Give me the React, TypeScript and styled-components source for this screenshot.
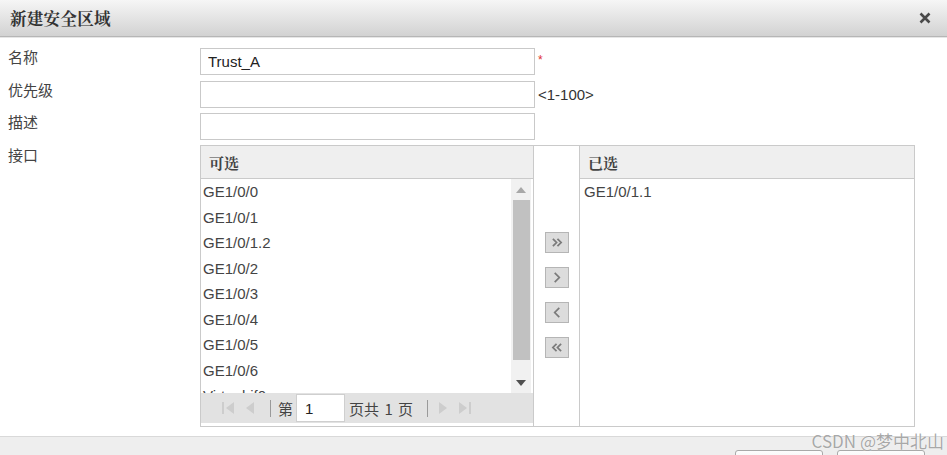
import React from 'react';
import styled, { createGlobalStyle } from 'styled-components';

const GlobalStyle = createGlobalStyle`
  html, body {
    margin: 0;
    padding: 0;
    background: #fff;
    overflow: hidden;
  }
  body {
    font-family: "Liberation Sans", "Noto Sans CJK SC", Arial, sans-serif;
  }
  * {
    box-sizing: border-box;
  }
`;

const available = [
  'GE1/0/0',
  'GE1/0/1',
  'GE1/0/1.2',
  'GE1/0/2',
  'GE1/0/3',
  'GE1/0/4',
  'GE1/0/5',
  'GE1/0/6',
  'Virtual-if0',
];
const selected = ['GE1/0/1.1'];

const CloseIcon = () => (
  <svg width="12" height="12" viewBox="0 0 12 12">
    <path d="M1.5 1.5L10.5 10.5M10.5 1.5L1.5 10.5" stroke="#4a4a4a" strokeWidth="2.6" />
  </svg>
);

const Chevrons = ({ dir, double }: { dir: 'left' | 'right'; double?: boolean }) => {
  let d: string;
  if (double) {
    d = dir === 'right'
      ? 'M7.5 6l4 4-4 4M12.5 6l4 4-4 4'
      : 'M11.5 6l-4 4 4 4M16.5 6l-4 4 4 4';
  } else {
    d = dir === 'right' ? 'M9.5 5l5 5-5 5' : 'M14.5 5l-5 5 5 5';
  }
  return (
    <svg width="22" height="19" viewBox="0 0 24 20">
      <path d={d} stroke="#7b7b7b" strokeWidth="1.9" fill="none" />
    </svg>
  );
};

const PagerIcon = ({ kind }: { kind: 'first' | 'prev' | 'next' | 'last' }) => {
  const c = '#cdcdcd';
  return (
    <svg width="16" height="14" viewBox="0 0 16 14">
      {kind === 'first' && (
        <>
          <rect x="1" y="1" width="2" height="12" fill={c} />
          <path d="M13 1L5 7l8 6z" fill={c} />
        </>
      )}
      {kind === 'prev' && <path d="M11 1L3 7l8 6z" fill={c} />}
      {kind === 'next' && <path d="M4 1l8 6-8 6z" fill={c} />}
      {kind === 'last' && (
        <>
          <path d="M3 1l8 6-8 6z" fill={c} />
          <rect x="13" y="1" width="2" height="12" fill={c} />
        </>
      )}
    </svg>
  );
};

const ArrowTriangle = ({ up, color }: { up?: boolean; color: string }) => (
  <svg width="10" height="6" viewBox="0 0 10 6">
    <path d={up ? 'M0 6L5 0l5 6z' : 'M0 0h10L5 6z'} fill={color} />
  </svg>
);

const App = () => (
  <>
    <GlobalStyle />
    <Dialog>
      <TitleBar>
        <Title>新建安全区域</Title>
        <CloseButton>
          <CloseIcon />
        </CloseButton>
      </TitleBar>

      <Form>
        <Label>名称</Label>
        <Field>
          <TextInput defaultValue="Trust_A" />
          <Required>*</Required>
        </Field>

        <Label>优先级</Label>
        <Field>
          <TextInput />
          <Hint>&lt;1-100&gt;</Hint>
        </Field>

        <Label>描述</Label>
        <Field>
          <TextInput />
        </Field>

        <Label>接口</Label>
        <Transfer>
          <Panel $width={333}>
            <PanelHeader>可选</PanelHeader>
            <ListArea>
              <Items>
                {available.map((name) => (
                  <Item key={name}>{name}</Item>
                ))}
              </Items>
              <ScrollTrack>
                <ScrollArrow>
                  <ArrowTriangle up color="#a8a8a8" />
                </ScrollArrow>
                <ScrollThumb />
                <ScrollSpacer />
                <ScrollArrow>
                  <ArrowTriangle color="#505050" />
                </ScrollArrow>
              </ScrollTrack>
            </ListArea>
            <Pager>
              <PagerIcon kind="first" />
              <PagerGap $w={6} />
              <PagerIcon kind="prev" />
              <PagerSep />
              <PagerText>第</PagerText>
              <PageInput defaultValue="1" />
              <PagerText>页共 1 页</PagerText>
              <PagerSep />
              <PagerIcon kind="next" />
              <PagerGap $w={5} />
              <PagerIcon kind="last" />
            </Pager>
          </Panel>

          <MoveColumn>
            <MoveButton><Chevrons dir="right" double /></MoveButton>
            <MoveButton><Chevrons dir="right" /></MoveButton>
            <MoveButton><Chevrons dir="left" /></MoveButton>
            <MoveButton><Chevrons dir="left" double /></MoveButton>
          </MoveColumn>

          <Panel $grow>
            <PanelHeader>已选</PanelHeader>
            <Items>
              {selected.map((name) => (
                <Item key={name} $indent={4}>{name}</Item>
              ))}
            </Items>
          </Panel>
        </Transfer>
      </Form>

      <Footer>
        <FooterButton />
        <FooterButton />
      </Footer>

      <Watermark>CSDN @梦中北山</Watermark>
    </Dialog>
  </>
);

const Dialog = styled.div`
  position: relative;
  width: 947px;
  height: 455px;
  overflow: hidden;
  background: #fff;
`;

const TitleBar = styled.div`
  height: 37px;
  display: flex;
  align-items: center;
  justify-content: space-between;
  padding: 0 16px 0 10px;
  background: linear-gradient(#f6f6f6, #d2d2d2);
  border-bottom: 1px solid #b6b6b6;
  box-shadow: 0 1px 0 #e6e6e6;
`;

const Title = styled.div`
  font-family: "Noto Serif CJK SC", "Noto Sans CJK SC", serif;
  font-size: 16.5px;
  font-weight: bold;
  color: #333;
  letter-spacing: 0.3px;
`;

const CloseButton = styled.div`
  display: flex;
  align-items: center;
  cursor: pointer;
`;

const Form = styled.div`
  display: grid;
  grid-template-columns: 200px 1fr;
  row-gap: 5.5px;
  padding-top: 11px;
`;

const Label = styled.div`
  padding-left: 8px;
  font-family: "Noto Sans CJK SC", sans-serif;
  font-size: 15px;
  line-height: 17px;
  color: #444;
`;

const Field = styled.div`
  display: flex;
  align-items: center;
`;

const TextInput = styled.input`
  width: 335px;
  height: 27px;
  border: 1px solid #c9c9c9;
  padding: 0 7px;
  font-family: "Liberation Sans", Arial, sans-serif;
  font-size: 15px;
  color: #222;
  outline: none;
`;

const Required = styled.span`
  align-self: flex-start;
  margin: 5px 0 0 3px;
  color: #e03030;
  font-size: 12px;
`;

const Hint = styled.span`
  margin-left: 3px;
  font-size: 15px;
  color: #333;
`;

const Transfer = styled.div`
  display: flex;
  width: 715px;
  height: 282px;
  margin-top: -0.5px;
  border: 1px solid #cacaca;
`;

const Panel = styled.div<{ $width?: number; $grow?: boolean }>`
  display: flex;
  flex-direction: column;
  ${({ $width }) => ($width ? `width: ${$width}px;` : '')}
  ${({ $grow }) => ($grow ? 'flex: 1;' : '')}
  border-right: ${({ $grow }) => ($grow ? 'none' : '1px solid #cacaca')};
  border-left: ${({ $grow }) => ($grow ? '1px solid #cacaca' : 'none')};
`;

const PanelHeader = styled.div`
  height: 33px;
  flex-shrink: 0;
  display: flex;
  align-items: center;
  padding-left: 8px;
  background: #efefef;
  border-bottom: 1px solid #cacaca;
  font-family: "Noto Serif CJK SC", "Noto Sans CJK SC", serif;
  font-size: 15px;
  font-weight: bold;
  color: #444;
`;

const ListArea = styled.div`
  display: flex;
  height: 214px;
  flex-shrink: 0;
`;

const Items = styled.div`
  flex: 1;
  overflow: hidden;
`;

const Item = styled.div<{ $indent?: number }>`
  height: 25.5px;
  line-height: 26px;
  padding-left: ${({ $indent }) => $indent ?? 2}px;
  font-size: 15px;
  color: #444;
  white-space: nowrap;
`;

const ScrollTrack = styled.div`
  width: 20px;
  margin-right: 2px;
  display: flex;
  flex-direction: column;
  align-items: center;
  background: #f1f1f1;
`;

const ScrollArrow = styled.div`
  height: 21px;
  width: 100%;
  display: flex;
  align-items: center;
  justify-content: center;
`;

const ScrollThumb = styled.div`
  width: 17px;
  height: 160px;
  background: #c1c1c1;
`;

const ScrollSpacer = styled.div`
  flex: 1;
`;

const Pager = styled.div`
  height: 30px;
  display: flex;
  align-items: center;
  padding-left: 20px;
  background: #e2e2e2;
  color: #333;
  font-size: 15px;
`;

const PagerGap = styled.span<{ $w: number }>`
  width: ${({ $w }) => $w}px;
`;

const PagerSep = styled.span`
  width: 1px;
  height: 17px;
  margin: 0 7px 0 11px;
  background: #9a9a9a;
`;

const PagerText = styled.span`
  font-family: "Noto Sans CJK SC", sans-serif;
  font-size: 15px;
  color: #444;
  margin-right: 3px;
  word-spacing: 2px;
`;

const PageInput = styled.input`
  width: 49px;
  height: 28px;
  margin-right: 4px;
  border: 1px solid #cfcfcf;
  padding: 0 8px;
  font-family: "Liberation Sans", Arial, sans-serif;
  font-size: 15px;
  color: #222;
  outline: none;
`;

const MoveColumn = styled.div`
  width: 45px;
  display: flex;
  flex-direction: column;
  align-items: center;
  gap: 14px;
  padding-top: 86px;
`;

const MoveButton = styled.div`
  width: 24px;
  height: 21px;
  display: flex;
  align-items: center;
  justify-content: center;
  border: 1px solid #b5b5b5;
  background: #dcdcdc;
  cursor: pointer;
`;

const Footer = styled.div`
  margin-top: 9px;
  height: 40px;
  display: flex;
  justify-content: flex-end;
  gap: 14px;
  padding: 13px 22px 0 0;
  background: #eeeeee;
  border-top: 1px solid #d9d9d9;
`;

const FooterButton = styled.div`
  width: 88px;
  height: 28px;
  border: 1px solid #a9a9a9;
  border-radius: 3px;
  background: linear-gradient(#fdfdfd, #e3e3e3);
`;

const Watermark = styled.div`
  position: absolute;
  right: 3px;
  top: 428px;
  font-family: "Noto Sans CJK SC", sans-serif;
  font-size: 17px;
  color: rgba(130, 130, 130, 0.7);
  text-shadow: 0 0 1px #fff;
  pointer-events: none;
`;

export default App;
